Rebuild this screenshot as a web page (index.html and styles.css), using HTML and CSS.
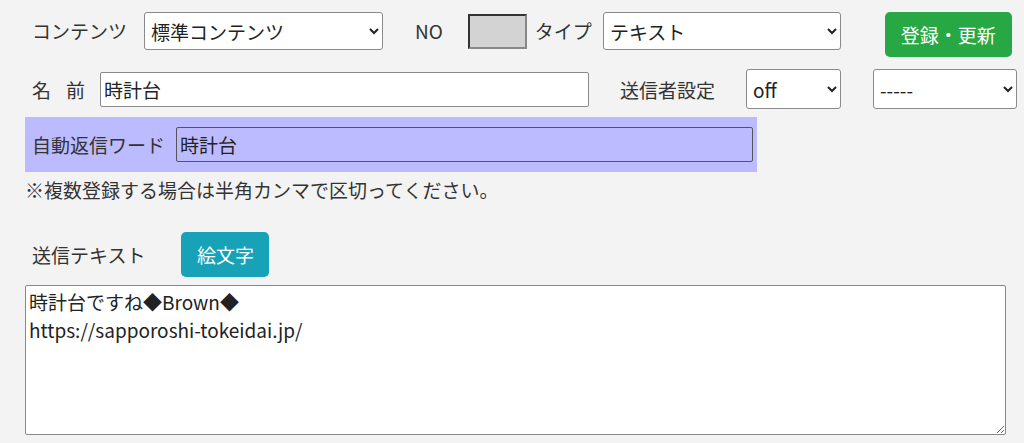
FILE: index.html
```html
<!DOCTYPE html>
<html lang="ja">
<head>
    <meta charset="UTF-8">
    <meta name="viewport" content="width=device-width, initial-scale=1.0">
    <title>コンテンツ編集</title>
    <link rel="stylesheet" href="styles.css">
</head>
<body>
    <div class="edit-form">
        <!-- 1行目 -->
        <div class="row row-top">
            <label class="lbl lbl-content">コンテンツ</label>
            <select class="sel sel-content">
                <option>標準コンテンツ</option>
            </select>
            <span class="lbl lbl-no">NO</span>
            <input type="text" class="no-box" readonly>
            <label class="lbl lbl-type">タイプ</label>
            <select class="sel sel-type">
                <option>テキスト</option>
            </select>
            <button type="button" class="btn btn-save">登録・更新</button>
        </div>

        <!-- 2行目 -->
        <div class="row row-name">
            <label class="lbl lbl-name">名前</label>
            <input type="text" class="txt txt-name" value="時計台">
            <label class="lbl lbl-sender">送信者設定</label>
            <select class="sel sel-off">
                <option>off</option>
            </select>
            <select class="sel sel-sender">
                <option>-----</option>
            </select>
        </div>

        <!-- 自動返信ワード -->
        <div class="row keyword-box">
            <label class="lbl lbl-keyword">自動返信ワード</label>
            <input type="text" class="txt txt-keyword" value="時計台">
        </div>
        <p class="note">※複数登録する場合は半角カンマで区切ってください。</p>

        <!-- 送信テキスト -->
        <div class="row row-text">
            <label class="lbl lbl-text">送信テキスト</label>
            <button type="button" class="btn btn-emoji">絵文字</button>
        </div>
        <textarea class="send-text">時計台ですね◆Brown◆
https://sapporoshi-tokeidai.jp/</textarea>
    </div>
</body>
</html>
```

FILE: styles.css
```css
body {
    margin: 0;
    background-color: #f3f3f3;
    font-family: "Noto Sans CJK JP", "Noto Sans", sans-serif;
    font-size: 19px;
    color: #333;
}

.edit-form {
    padding: 12px 0 0 25px;
}

.row {
    display: flex;
    align-items: center;
}

.row-top {
    align-items: flex-start;
}

.lbl {
    white-space: nowrap;
    margin-left: 7px;
}

.row-top .lbl {
    line-height: 38px;
}

.sel {
    height: 38px;
    font-family: inherit;
    font-size: 19px;
    color: #222;
    background-color: #fff;
    border: 1px solid #8a8a8a;
    border-radius: 3px;
    padding: 0 2px;
}

.txt {
    height: 35px;
    box-sizing: border-box;
    font-family: inherit;
    font-size: 19px;
    color: #222;
    border: 1px solid #8a8a8a;
    border-radius: 2px;
    padding: 0 3px;
    background-color: #fff;
}

.btn {
    border: none;
    border-radius: 5px;
    color: #fff;
    font-family: inherit;
    font-size: 19px;
    cursor: pointer;
}

/* 1行目 */
.sel-content {
    width: 239px;
    margin-left: 17px;
}

.lbl-no {
    margin-left: 32px;
}

.no-box {
    width: 59px;
    height: 35px;
    box-sizing: border-box;
    margin: 2px 0 0 25px;
    background-color: #d3d3d3;
    border: 2px solid;
    border-color: #333 #888 #888 #333;
}

.lbl-type {
    margin-left: 8px;
}

.sel-type {
    width: 238px;
    margin-left: 11px;
}

.btn-save {
    width: 127px;
    height: 45px;
    margin-left: 44px;
    background-color: #28a745;
}

/* 2行目 */
.row-name {
    margin-top: 12px;
}

.lbl-name {
    letter-spacing: 15px;
}

.txt-name {
    width: 489px;
}

.lbl-sender {
    margin-left: 31px;
}

.row-name .sel {
    height: 40px;
}

.sel-off {
    width: 95px;
    margin-left: 31px;
}

.sel-sender {
    width: 144px;
    margin-left: 32px;
}

/* 自動返信ワード */
.keyword-box {
    width: 732px;
    box-sizing: border-box;
    margin-top: 8px;
    padding: 10px 4px 10px 0;
    background-color: #bdbbff;
}

.txt-keyword {
    flex: 1;
    margin-left: 11px;
    background-color: transparent;
    border-color: #555;
}

.note {
    margin: 4px 0 0;
    line-height: 27px;
}

/* 送信テキスト */
.row-text {
    margin-top: 29px;
}

.btn-emoji {
    width: 88px;
    height: 45px;
    margin-left: 36px;
    background-color: #17a2b8;
}

.send-text {
    display: block;
    width: 981px;
    height: 150px;
    box-sizing: border-box;
    margin-top: 8px;
    padding: 2px 3px;
    font-family: inherit;
    font-size: 19px;
    line-height: 28px;
    color: #222;
    border: 1px solid #888;
    border-radius: 2px;
    background-color: #fff;
}
```
